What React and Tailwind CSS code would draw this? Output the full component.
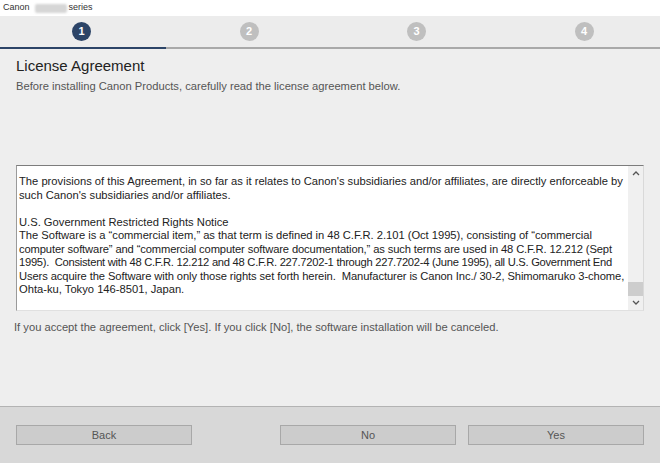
export default function App() {
  const font = { fontFamily: '"Liberation Sans", Arial, sans-serif' };
  const lines = [
    ["The provisions of this Agreement, in so far as it relates to Canon's subsidiaries and/or affiliates, are directly enforceable by", ""],
    ["such Canon's subsidiaries and/or affiliates.", ""],
    ["\u00a0", ""],
    ["U.S. Government Restricted Rights Notice", ""],
    ["The Software is a \u201ccommercial item,\u201d as that term is defined in 48 C.F.R. 2.101 (Oct 1995), consisting of \u201ccommercial", "tracking-[-0.03px]"],
    ["computer software\u201d and \u201ccommercial computer software documentation,\u201d as such terms are used in 48 C.F.R. 12.212 (Sept", "tracking-[-0.13px]"],
    ["1995).  Consistent with 48 C.F.R. 12.212 and 48 C.F.R. 227.7202-1 through 227.7202-4 (June 1995), all U.S. Government End", "tracking-[-0.27px]"],
    ["Users acquire the Software with only those rights set forth herein.  Manufacturer is Canon Inc./ 30-2, Shimomaruko 3-chome,", "tracking-[-0.1px]"],
    ["Ohta-ku, Tokyo 146-8501, Japan.", ""],
  ];
  return (
    <div className="w-[660px] h-[463px] flex flex-col bg-[#ededed] overflow-hidden" style={font}>
      {/* title bar */}
      <div className="h-[16px] bg-white flex items-center pl-[3px] text-[9px] text-[#333] gap-[5px]">
        <span>Canon</span>
        <span className="w-[32px] h-[9px] bg-[#d6d6d6] rounded-[2px] blur-[1px]" />
        <span className="-ml-[3px]">series</span>
      </div>
      {/* steps */}
      <div className="h-[31px] flex items-center pl-[72px] gap-[148.5px] bg-[#ececec]">
        {[1, 2, 3, 4].map((n) => (
          <div
            key={n}
            className={
              "w-[19px] h-[19px] shrink-0 rounded-full flex items-center justify-center text-white text-[11px] font-bold " +
              (n === 1 ? "bg-[#2c4467]" : "bg-[#bfbfbf]")
            }
          >
            {n}
          </div>
        ))}
      </div>
      <div className="h-[2px] flex">
        <div className="w-[166px] bg-[#2c4467]" />
        <div className="flex-1 bg-[#a9a9a9]" />
      </div>
      {/* content */}
      <div className="flex-1 flex flex-col px-[16px] bg-[#eeeeee]">
        <div className="mt-[8px] text-[15px] leading-[18px] text-[#222]">License Agreement</div>
        <div className="mt-[5px] text-[11.2px] leading-[13px] text-[#555]">
          Before installing Canon Products, carefully read the license agreement below.
        </div>
        <div className="mt-[72px] h-[146px] flex bg-white border border-t-[#7c7c7c] border-l-[#9a9a9a] border-r-[#d9d9d9] border-b-[#e0e0e0]">
          <div className="flex-1 pl-[2px] pt-[9px] text-[11.2px] leading-[13.5px] text-[#222] overflow-hidden">
            {lines.map(([l, c], i) => (
              <div key={i} className={"whitespace-pre " + c}>
                {l}
              </div>
            ))}
          </div>
          <div className="w-[15px] bg-[#f0f0f0] flex flex-col items-center justify-between py-[4px] text-[#555]">
            <svg width="8" height="6" viewBox="0 0 8 6">
              <path d="M1 5 L4 2 L7 5" fill="none" stroke="#555" strokeWidth="1.3" />
            </svg>
            <div className="flex-1 w-full flex flex-col justify-end pb-[4px]">
              <div className="h-[14px] w-full bg-[#cdcdcd]" />
            </div>
            <svg width="8" height="6" viewBox="0 0 8 6">
              <path d="M1 1 L4 4 L7 1" fill="none" stroke="#555" strokeWidth="1.3" />
            </svg>
          </div>
        </div>
        <div className="mt-[10px] text-[11.2px] leading-[13px] text-[#555] -ml-[2px]">
          If you accept the agreement, click [Yes]. If you click [No], the software installation will be canceled.
        </div>
      </div>
      {/* footer */}
      <div className="h-[1px] bg-[#b3b3b3]" />
      <div className="h-[56px] bg-[#d8d8d8] flex items-center px-[16px]">
        <button className="w-[176px] h-[20px] bg-[#cccccc] border border-[#a8a8a8] text-[11px] text-[#555]">Back</button>
        <div className="flex-1" />
        <button className="w-[176px] h-[20px] bg-[#cccccc] border border-[#a8a8a8] text-[11px] text-[#555]">No</button>
        <button className="ml-[12px] w-[176px] h-[20px] bg-[#cccccc] border border-[#a8a8a8] text-[11px] text-[#555]">Yes</button>
      </div>
    </div>
  );
}
